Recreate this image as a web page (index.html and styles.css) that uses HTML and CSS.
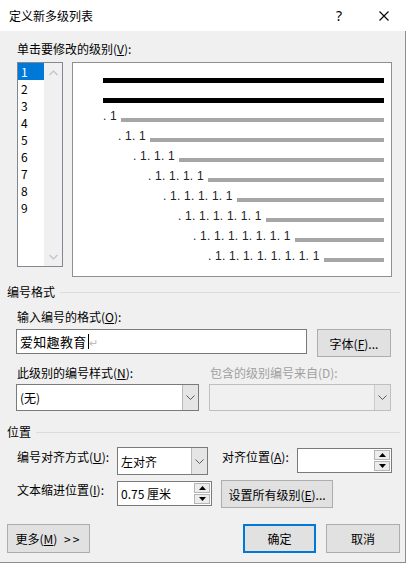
FILE: index.html
```html
<!DOCTYPE html>
<html lang="zh-CN">
<head>
  <meta charset="UTF-8" />
  <meta name="viewport" content="width=device-width, initial-scale=1.0" />
  <title>定义新多级列表</title>
  <link rel="stylesheet" href="styles.css">
</head>
<body>

  <div class="dialog">
    <div class="titlebar">
      <span class="title">定义新多级列表</span>
      <span class="tb-btn help">?</span>
      <span class="tb-btn close">
        <svg width="10" height="10" viewBox="0 0 10 10"><path d="M0.5 0.5L9.5 9.5M9.5 0.5L0.5 9.5" stroke="#000" stroke-width="1.1" fill="none"/></svg>
      </span>
    </div>

    <div class="body">
      <div class="label lbl-levels">单击要修改的级别(<u>V</u>):</div>

      <div class="levels">
        <div class="listbox">
          <ul class="items">
            <li class="sel">1</li>
            <li>2</li>
            <li>3</li>
            <li>4</li>
            <li>5</li>
            <li>6</li>
            <li>7</li>
            <li>8</li>
            <li>9</li>
          </ul>
          <div class="vscroll">
            <svg width="9" height="6" viewBox="0 0 9 6"><polyline points="0.5,5 4.5,1 8.5,5" stroke="#c2c2c2" stroke-width="1.2" fill="none"/></svg>
            <svg width="9" height="6" viewBox="0 0 9 6"><polyline points="0.5,1 4.5,5 8.5,1" stroke="#c2c2c2" stroke-width="1.2" fill="none"/></svg>
          </div>
        </div>

        <!-- podgląd poziomów -->
        <div class="preview">
          <div class="pv-row"><span class="pv-bar black"></span></div>
          <div class="pv-row"><span class="pv-bar black"></span></div>
          <div class="pv-row"><span class="pv-num">. 1</span><span class="pv-bar"></span></div>
          <div class="pv-row lv2"><span class="pv-num">. 1. 1</span><span class="pv-bar"></span></div>
          <div class="pv-row lv3"><span class="pv-num">. 1. 1. 1</span><span class="pv-bar"></span></div>
          <div class="pv-row lv4"><span class="pv-num">. 1. 1. 1. 1</span><span class="pv-bar"></span></div>
          <div class="pv-row lv5"><span class="pv-num">. 1. 1. 1. 1. 1</span><span class="pv-bar"></span></div>
          <div class="pv-row lv6"><span class="pv-num">. 1. 1. 1. 1. 1. 1</span><span class="pv-bar"></span></div>
          <div class="pv-row lv7"><span class="pv-num">. 1. 1. 1. 1. 1. 1. 1</span><span class="pv-bar"></span></div>
          <div class="pv-row lv8"><span class="pv-num">. 1. 1. 1. 1. 1. 1. 1. 1</span><span class="pv-bar"></span></div>
        </div>
      </div>

      <div class="group-title">编号格式</div>

      <div class="label lbl-format">输入编号的格式(<u>O</u>):</div>
      <div class="format-row">
        <div class="textbox">爱知趣教育<span class="caret"></span><span class="para">↵</span></div>
        <button class="btn btn-font">字体(<u>F</u>)...</button>
      </div>

      <div class="style-labels">
        <span class="label">此级别的编号样式(<u>N</u>):</span>
        <span class="label disabled">包含的级别编号来自(D):</span>
      </div>
      <div class="style-row">
        <div class="combo combo-style">
          <span class="combo-value">(无)</span>
          <span class="combo-arrow">
            <svg width="9" height="5" viewBox="0 0 9 5"><polyline points="0.5,0.5 4.5,4.5 8.5,0.5" stroke="#5a5a5a" fill="none"/></svg>
          </span>
        </div>
        <div class="combo combo-from disabled">
          <span class="combo-value"></span>
          <span class="combo-arrow">
            <svg width="9" height="5" viewBox="0 0 9 5"><polyline points="0.5,0.5 4.5,4.5 8.5,0.5" stroke="#5a5a5a" fill="none"/></svg>
          </span>
        </div>
      </div>

      <div class="group-title">位置</div>

      <div class="pos-grid">
        <span class="label pos-label">编号对齐方式(<u>U</u>):</span>
        <div class="combo combo-align">
          <span class="combo-value">左对齐</span>
          <span class="combo-arrow">
            <svg width="9" height="5" viewBox="0 0 9 5"><polyline points="0.5,0.5 4.5,4.5 8.5,0.5" stroke="#5a5a5a" fill="none"/></svg>
          </span>
        </div>
        <span class="label pos-label">对齐位置(<u>A</u>):</span>
        <div class="spin">
          <span class="spin-value"></span>
          <span class="spin-btns">
            <span class="spin-btn"><svg width="7" height="4" viewBox="0 0 7 4"><polygon points="0,4 3.5,0 7,4" fill="#000"/></svg></span>
            <span class="spin-btn"><svg width="7" height="4" viewBox="0 0 7 4"><polygon points="0,0 3.5,4 7,0" fill="#000"/></svg></span>
          </span>
        </div>

        <span class="label pos-label">文本缩进位置(<u>I</u>):</span>
        <div class="spin">
          <span class="spin-value">0.75 厘米</span>
          <span class="spin-btns">
            <span class="spin-btn"><svg width="7" height="4" viewBox="0 0 7 4"><polygon points="0,4 3.5,0 7,4" fill="#000"/></svg></span>
            <span class="spin-btn"><svg width="7" height="4" viewBox="0 0 7 4"><polygon points="0,0 3.5,4 7,0" fill="#000"/></svg></span>
          </span>
        </div>
        <button class="btn btn-all">设置所有级别(<u>E</u>)...</button>
      </div>

      <div class="footer">
        <button class="btn btn-more">更多(<u>M</u>) <span class="arrows">&gt;&gt;</span></button>
        <button class="btn btn-ok">确定</button>
        <button class="btn btn-cancel">取消</button>
      </div>
    </div>
  </div>

</body>
</html>
```

FILE: styles.css
```css
html, body {
  margin: 0;
  padding: 0;
}

body {
  background: #fff;
  font-family: "Noto Sans CJK SC", "Noto Sans", sans-serif;
  font-size: 12px;
  color: #000;
}

.dialog {
  width: 406px;
  height: 563px;
  display: flex;
  flex-direction: column;
}

/* pasek tytułu */
.titlebar {
  height: 31px;
  flex: none;
  background: #fff;
  display: flex;
  align-items: center;
  padding-left: 9px;
}

.title {
  flex: 1;
  line-height: 16px;
}

.tb-btn {
  width: 46px;
  height: 31px;
  display: flex;
  align-items: center;
  justify-content: center;
}

.help {
  font-family: "Noto Sans", sans-serif;
  font-size: 14px;
}

.close {
  width: 44px;
}

.body {
  flex: 1;
  background: #f0f0f0;
  border-right: 1px solid #8c8c8c;
  border-bottom: 1px solid #8c8c8c;
  padding: 0 13px 0 16px;
}

.label {
  line-height: 16px;
  padding-left: 1px;
  white-space: nowrap;
}

.label.disabled {
  color: #a0a0a0;
}

.lbl-levels {
  margin-top: 10px;
}

.levels {
  margin-top: 5px;
  display: flex;
  align-items: flex-start;
  gap: 9px;
}

.listbox {
  margin-left: 1px;
  width: 46px;
  height: 205px;
  box-sizing: border-box;
  border: 1px solid #828790;
  background: #fff;
  display: flex;
}

.items {
  list-style: none;
  margin: 0;
  padding: 0;
  width: 26px;
}

.items li {
  height: 17px;
  line-height: 17px;
  padding-left: 3px;
}

.items li.sel {
  background: #0078d7;
  color: #fff;
}

.vscroll {
  width: 18px;
  background: #f0f0f0;
  display: flex;
  flex-direction: column;
  justify-content: space-between;
  align-items: center;
  padding: 7px 0 6px;
}

.preview {
  width: 320px;
  height: 215px;
  box-sizing: border-box;
  border: 1px solid #8f8f8f;
  background: #fff;
  padding: 0 7px 0 30px;
}

.pv-row {
  height: 20px;
  display: flex;
  align-items: flex-end;
  gap: 4px;
}

.pv-row.lv2 { padding-left: 15px; }
.pv-row.lv3 { padding-left: 30px; }
.pv-row.lv4 { padding-left: 45px; }
.pv-row.lv5 { padding-left: 60px; }
.pv-row.lv6 { padding-left: 75px; }
.pv-row.lv7 { padding-left: 90px; }
.pv-row.lv8 { padding-left: 105px; }

.pv-num {
  font-family: "Liberation Sans", Arial, sans-serif;
  font-size: 12px;
  line-height: 12px;
  letter-spacing: 0.2px;
  color: #222;
  white-space: pre;
  margin-bottom: 1px;
}

.pv-bar {
  flex: 1;
  height: 4px;
  margin-bottom: 1px;
  background: #a6a6a6;
}

.pv-bar.black {
  height: 5px;
  margin-bottom: 0;
  background: #000;
}

.group-title {
  margin: 0 -8px 0 -9px;
  display: flex;
  align-items: center;
  gap: 5px;
  line-height: 16px;
}

.group-title::after {
  content: "";
  flex: 1;
  height: 1px;
  background: #dcdcdc;
}

.levels + .group-title {
  margin-top: 7px;
}

.lbl-format {
  margin-top: 9px;
}

.format-row {
  margin-top: 4px;
  display: flex;
  align-items: flex-start;
  gap: 10px;
}

.textbox {
  width: 291px;
  height: 25px;
  box-sizing: border-box;
  border: 1px solid #7a7a7a;
  background: #fff;
  display: flex;
  align-items: center;
  padding-left: 3px;
  font-size: 13px;
  letter-spacing: 0.3px;
}

.caret {
  width: 1px;
  height: 15px;
  background: #000;
  margin-left: 1px;
}

.para {
  color: #bdbdbd;
  font-size: 11px;
}

.btn {
  font-family: inherit;
  font-size: 12px;
  color: #000;
  background: #e1e1e1;
  border: 1px solid #adadad;
  padding: 0;
  height: 28px;
  box-sizing: border-box;
  white-space: nowrap;
}

.btn-font {
  width: 74px;
}

.style-labels {
  margin-top: 8px;
  display: grid;
  grid-template-columns: 193px auto;
}

.style-row {
  margin-top: 3px;
  display: flex;
  gap: 10px;
}

.combo {
  height: 27px;
  box-sizing: border-box;
  border: 1px solid #7a7a7a;
  background: #fff;
  display: flex;
}

.combo-value {
  flex: 1;
  display: flex;
  align-items: center;
  padding-left: 3px;
}

.combo-arrow {
  width: 15px;
  background: #e5e5e5;
  border-left: 1px solid #b9b9b9;
  display: flex;
  align-items: center;
  justify-content: center;
}

.combo-style {
  width: 183px;
}

.combo-from {
  width: 182px;
}

.combo.disabled {
  border-color: #bfbfbf;
  background: #f0f0f0;
}

.combo.disabled .combo-arrow {
  background: #e6e6e6;
  border-left-color: #cccccc;
}

.group-title.pos {
  margin-top: 13px;
}

.style-row + .group-title {
  margin-top: 13px;
}

.pos-grid {
  margin-top: 7px;
  display: grid;
  grid-template-columns: 101px 104px 76px 95px;
  grid-template-rows: 28px 28px;
  row-gap: 5px;
  align-items: start;
}

.pos-label {
  padding-top: 2px;
}

.combo-align {
  width: 91px;
  height: 28px;
}

.spin {
  width: 95px;
  height: 25px;
  margin-top: 1px;
  box-sizing: border-box;
  border: 1px solid #7a7a7a;
  background: #fff;
  display: flex;
}

.spin-value {
  flex: 1;
  display: flex;
  align-items: center;
  padding-left: 3px;
}

.spin-btns {
  width: 16px;
  display: flex;
  flex-direction: column;
  gap: 1px;
  padding: 1px 1px 1px 0;
}

.spin-btn {
  flex: 1;
  background: #ececec;
  border: 1px solid #b5b5b5;
  display: flex;
  align-items: center;
  justify-content: center;
}

.btn-all {
  grid-column: 3 / 5;
  width: 112px;
}

.footer {
  margin: 16px -8px 0 -9px;
  display: flex;
}

.footer .btn {
  height: 29px;
}

.btn-more {
  width: 83px;
}

.arrows {
  letter-spacing: 2px;
  margin-left: 4px;
}

.btn-ok {
  margin-left: auto;
  width: 73px;
  border: 2px solid #0078d7;
}

.btn-cancel {
  margin-left: 10px;
  width: 74px;
}
```
